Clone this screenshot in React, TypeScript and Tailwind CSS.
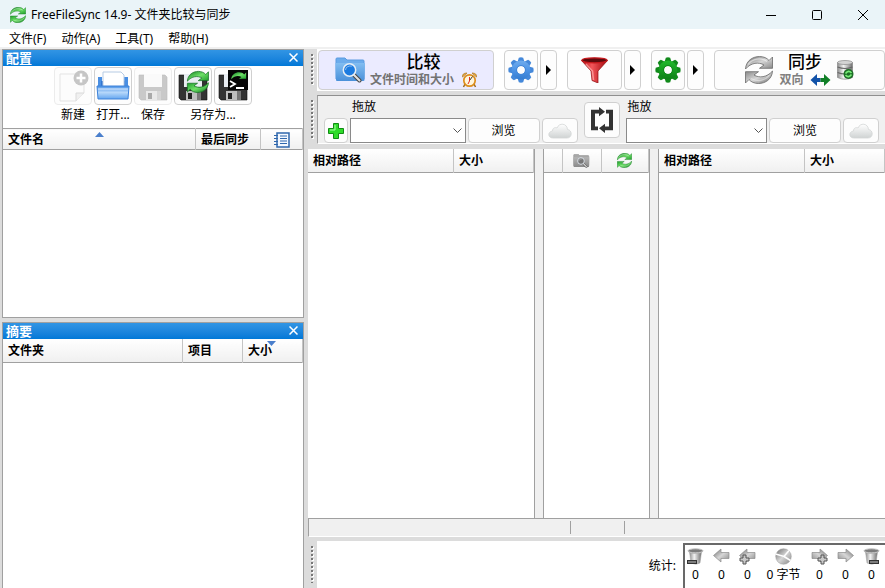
import { ReactNode } from "react";
import clsx from "clsx";

const menus = ["文件(F)", "动作(A)", "工具(T)", "帮助(H)"];

const buttonBase = "flex shrink-0 items-center justify-center rounded border border-[#d0d0d0] bg-[#fdfdfd]";

const headCell =
  "border-r border-[#c4c4c4] px-[5px] pt-px text-left align-middle font-bold whitespace-nowrap bg-linear-to-b from-white to-[#f0f0f0]";

const arrowTop = "M0.5 13C1 4.500 8 0.500 14.500 0.500C18.500 0.500 22 2 24 4.500L27.500 1V12.300H14.500L19 9C14 5.800 6 6.500 0.500 13Z";

function Gradients() {
  return (
    <svg className="absolute h-0 w-0" aria-hidden="true">
      <defs>
        <linearGradient id="green" x1="0" y1="0" x2="1" y2="1">
          <stop offset="0" stopColor="#0b7a1c" />
          <stop offset="0.5" stopColor="#6fe068" />
          <stop offset="1" stopColor="#1b9a28" />
        </linearGradient>
        <linearGradient id="gray" x1="0" y1="0" x2="1" y2="1">
          <stop offset="0" stopColor="#6c6c6c" />
          <stop offset="0.5" stopColor="#d6d6d6" />
          <stop offset="1" stopColor="#858585" />
        </linearGradient>
        <linearGradient id="blue" gradientUnits="userSpaceOnUse" x1="0" y1="0" x2="0" y2="26">
          <stop offset="0" stopColor="#7db5f0" />
          <stop offset="0.5" stopColor="#4d94e6" />
          <stop offset="1" stopColor="#2a73c8" />
        </linearGradient>
        <linearGradient id="folder" x1="0" y1="0" x2="0" y2="1">
          <stop offset="0" stopColor="#82bdf1" />
          <stop offset="1" stopColor="#4a90da" />
        </linearGradient>
        <linearGradient id="folderGray" x1="0" y1="0" x2="0" y2="1">
          <stop offset="0" stopColor="#b4b4b4" />
          <stop offset="1" stopColor="#8a8a8a" />
        </linearGradient>
        <linearGradient id="tray" x1="0" y1="0" x2="0" y2="1">
          <stop offset="0" stopColor="#4b92e6" />
          <stop offset="0.5" stopColor="#b5d7fa" />
          <stop offset="1" stopColor="#64a6ef" />
        </linearGradient>
        <linearGradient id="red" x1="0" y1="0" x2="1" y2="0">
          <stop offset="0" stopColor="#b80f14" />
          <stop offset="0.4" stopColor="#f3565a" />
          <stop offset="1" stopColor="#a0060b" />
        </linearGradient>
        <linearGradient id="greenGear" gradientUnits="userSpaceOnUse" x1="0" y1="0" x2="0" y2="26">
          <stop offset="0" stopColor="#23c52f" />
          <stop offset="1" stopColor="#0a7412" />
        </linearGradient>
        <linearGradient id="metal" x1="0" y1="0" x2="1" y2="0">
          <stop offset="0" stopColor="#8d8d8d" />
          <stop offset="0.4" stopColor="#f2f2f2" />
          <stop offset="1" stopColor="#707070" />
        </linearGradient>
        <linearGradient id="cloud" x1="0" y1="0" x2="0" y2="1">
          <stop offset="0" stopColor="#ffffff" />
          <stop offset="1" stopColor="#cfd3d3" />
        </linearGradient>
      </defs>
    </svg>
  );
}

function SyncArrows({ tone, size }: { tone: "green" | "gray"; size: number }) {
  const line = tone === "green" ? "#1b7d28" : "#6a6a6a";
  return (
    <svg width={size} height={size} viewBox="0 0 28 28" fill={`url(#${tone})`} stroke={line} strokeWidth="0.8">
      <path d={arrowTop} />
      <path d={arrowTop} transform="rotate(180 14 14)" />
      <path d="M3 8.500C7 2.500 16 1 22 5.500" fill="none" stroke="#fff" strokeOpacity="0.5" strokeWidth="1.2" />
      <path d="M6 22.500C12 26 20 25 24.500 19" fill="none" stroke="#fff" strokeOpacity="0.4" strokeWidth="1.2" />
    </svg>
  );
}

function Gear({ fill, line }: { fill: string; line: string }) {
  // tooth outline turned in eight steps round the hub
  const tooth = "M-3.500 -8L-2.200 -12.300Q0 -13 2.200 -12.300L3.500 -8Z";
  return (
    <svg width="26" height="26" viewBox="0 0 26 26">
      {[0, 45, 90, 135, 180, 225, 270, 315].map((a) => (
        <path key={a} d={tooth} fill={line} transform={`translate(13 13) rotate(${a})`} />
      ))}
      <path
        d="M13 3.500A9.500 9.500 0 1 1 13 22.500A9.500 9.500 0 1 1 13 3.500ZM13 9A4 4 0 1 0 13 17A4 4 0 1 0 13 9Z"
        fill={fill}
        fillRule="evenodd"
      />
      <circle cx="13" cy="13" r="4.500" fill="none" stroke={line} />
    </svg>
  );
}

function FolderSearch({ gray }: { gray?: boolean }) {
  const line = gray ? "#8a8a8a" : "#5a9be0";
  return (
    <svg width={gray ? 17 : 31} height={gray ? 14 : 26} viewBox="0 0 31 26">
      <path d="M1 22V2Q1 1 2 1H10L12 3H28Q29 3 29 4V22Z" fill={gray ? "#a8a8a8" : "#6cacec"} stroke={line} />
      <path d="M0.500 6H30L29.500 23Q29.500 24 28 24H2Q1 24 1 23Z" fill={gray ? "url(#folderGray)" : "url(#folder)"} />
      <path d="M19 18L24.500 23.500" stroke={gray ? "#555" : "#474747"} strokeWidth="4" strokeLinecap="round" />
      <path d="M19 18L24.500 23.500" stroke="#e2e2e2" strokeWidth="2" strokeLinecap="round" />
      <circle cx="14.500" cy="13" r="6.200" fill={gray ? "#777" : "#1c7be0"} stroke="#e6eef6" strokeWidth="1.500" />
      <path d="M10.500 13Q11 8.500 17 9" stroke="#fff" strokeOpacity="0.500" fill="none" />
    </svg>
  );
}

function Clock() {
  return (
    <svg width="15" height="16" viewBox="0 0 15 16">
      <path d="M3 12L1.500 15M12 12L13.500 15" stroke="#9b6a20" strokeWidth="1.500" />
      <path d="M0.500 5Q0 1 5 1ZM14.500 5Q15 1 10 1Z" fill="#f2b238" stroke="#aa7424" strokeWidth="0.700" />
      <circle cx="7.500" cy="8.500" r="5.700" fill="#fff6dd" stroke="#dd8f1d" strokeWidth="1.700" />
      <path d="M7.500 8.500L10.500 4.500" stroke="#333" />
      <path d="M7.500 5V9L6 12" stroke="#e12f21" fill="none" />
    </svg>
  );
}

function Funnel() {
  return (
    <svg width="27" height="26" viewBox="0 0 27 26">
      <path d="M0.500 3.500L10 14L11 23.500L17 26V14L26.500 3.500Z" fill="url(#red)" stroke="#8c0b0f" strokeWidth="0.700" />
      <ellipse cx="13.500" cy="3.300" rx="12.700" ry="2.500" fill="#5c0b0d" stroke="#c9181d" strokeWidth="1.200" />
      <path d="M5 7L11.500 14L12.500 23" stroke="#ffb0ae" strokeOpacity="0.700" fill="none" strokeWidth="1.500" />
    </svg>
  );
}

function Cloud() {
  return (
    <svg width="24" height="16" viewBox="0 0 24 16">
      <path
        d="M5 15C-0.500 15-0.500 8.500 4.500 8C4.500 5 7 4 9 5C11-0.500 19 0 19.500 6.500C24.500 7 24.500 15 19 15Z"
        fill="url(#cloud)"
        stroke="#d3d6d6"
        strokeWidth="0.800"
      />
    </svg>
  );
}

function Floppy({ dim, children }: { dim?: boolean; children?: ReactNode }) {
  const body = dim ? "#c9c9c9" : "#333";
  return (
    <svg width="34" height="34" viewBox="0 0 34 34">
      <path d="M3 6H29L31 8V31H5L3 29Z" fill={body} stroke={dim ? "#bcbcbc" : "#111"} strokeWidth="0.600" />
      <path d="M8 5H26V18H8Z" fill={dim ? "#fafafa" : "#e9edf2"} />
      <path d="M10 22H25V31H10Z" fill={dim ? "#e9e9e9" : "#bfbfbf"} />
      <path d="M12 24H16V30H12Z" fill={dim ? "#a9a9a9" : "#222"} />
      <path d="M21 22H25V31H21Z" fill={dim ? "#d6d6d6" : "#777"} />
      {children}
    </svg>
  );
}

function SaveSync() {
  return (
    <Floppy>
      <g transform="translate(11 2) scale(0.78)" fill="url(#green)" stroke="#187326">
        <path d={arrowTop} />
        <path d={arrowTop} transform="rotate(180 14 14)" />
      </g>
    </Floppy>
  );
}

function SaveBatch() {
  return (
    <Floppy>
      <rect x="12" y="1" width="20" height="20" fill="#050505" />
      <path d={arrowTop} transform="translate(15 3) scale(0.55)" fill="url(#green)" />
      <path d="M14 12L19 15L14 18M20 19H28" stroke="#fff" strokeWidth="1.800" fill="none" />
    </Floppy>
  );
}

function NewFile() {
  return (
    <svg width="34" height="34" viewBox="0 0 34 34">
      <path d="M4 5H28V24L20 32H4Z" fill="#fcfcfc" stroke="#e3e3e3" />
      <path d="M28 24H20V32" fill="#f0f0f0" stroke="#dadada" />
      <circle cx="25" cy="9" r="7.500" fill="#c6c6c6" />
      <path d="M25 4.500V13.500M20.500 9H29.500" stroke="#fff" strokeWidth="2.500" />
    </svg>
  );
}

function OpenTray() {
  return (
    <svg width="34" height="34" viewBox="0 0 34 34">
      <path d="M2 8H6V17H2ZM28 8H32V17H28Z" fill="#4a8fe3" />
      <path d="M5 12H29V19H5Z" fill="#3275cf" />
      <path d="M7 3H25L28 6V18H7Z" fill="#fff" stroke="#b6cbe4" />
      <path d="M1 17H33L32 30H2Z" fill="url(#tray)" stroke="#3e83da" />
      <path d="M2 20H32" stroke="#dcecff" />
    </svg>
  );
}

function Database() {
  return (
    <svg width="17" height="20" viewBox="0 0 17 20">
      <path d="M0.500 2.500V17.500Q8 21 15.500 17.500V2.500Z" fill="url(#metal)" stroke="#888" strokeWidth="0.700" />
      <ellipse cx="8" cy="2.500" rx="7.500" ry="2" fill="#d4d4d4" stroke="#8a8a8a" strokeWidth="0.700" />
      <path d="M0.500 7Q8 10 15.500 7M0.500 12.500Q8 15.500 15.500 12.500" stroke="#666" strokeWidth="1.200" fill="none" />
      <circle cx="11.500" cy="14" r="5" fill="#1e6d27" />
      <path d="M8.500 13.500Q11.500 9.500 14.500 13M14.500 14.500Q11.500 18.500 8.500 15" stroke="#78ed78" strokeWidth="1.600" fill="none" />
    </svg>
  );
}

function TwoWay() {
  return (
    <svg width="21" height="12" viewBox="0 0 21 12">
      <path d="M0.500 6L7 0V4H10.500V8H7V12Z" fill="#1252a8" />
      <path d="M20.500 6L14 0V4H10.500V8H14V12Z" fill="#128028" />
    </svg>
  );
}

function Swap() {
  return (
    <svg width="24" height="26" viewBox="0 0 24 28" preserveAspectRatio="none" fill="none" stroke="#333" strokeWidth="4">
      <path d="M10 5H3V23H8M16 5H21V23H15" />
      <path d="M9 0L15 5L9 10ZM15 18L9 23L15 28Z" fill="#333" stroke="none" />
    </svg>
  );
}

function Notebook() {
  return (
    <svg width="16" height="16" viewBox="0 0 16 16" fill="none" stroke="#2f67ad">
      <rect x="3" y="1" width="12" height="14" fill="#f3f8ff" strokeWidth="1.500" />
      <path d="M6 4H13M6 6.500H13M6 9H13M6 11.500H13M0 3.500H4M0 6.500H4M0 9.500H4M0 12.500H4" />
    </svg>
  );
}

function StatIcon({ kind }: { kind: string }) {
  const flip = kind.startsWith("right");
  if (kind.startsWith("delete")) {
    return (
      <svg width="17" height="17" viewBox="0 0 17 17">
        <path d="M2.500 4L4 15Q9 17.500 13 15L14.500 4Z" fill="url(#metal)" stroke="#a5a5a5" strokeWidth="0.500" />
        <path d="M1 3Q2 5.500 8.500 5.500Q15 5.500 16 3Z" fill="#d6d6d6" stroke="#9a9a9a" strokeWidth="0.500" />
        <ellipse cx="8.500" cy="2.800" rx="7.500" ry="2" fill="#7c7c7c" stroke="#c4c4c4" />
        <rect x={kind === "deleteLeft" ? 0.5 : 6.5} y="12.500" width="9" height="3" fill="#7d7d7d" stroke="#333" />
      </svg>
    );
  }
  if (kind === "bytes") {
    return (
      <svg width="17" height="17" viewBox="0 0 17 17">
        <circle cx="8.500" cy="8.500" r="7.800" fill="url(#gray)" stroke="#999" strokeWidth="0.500" />
        <path d="M0.500 6L9 8.500L14 2.500M9 8.500L15.500 12.500" stroke="#fff" strokeWidth="1.500" fill="none" />
      </svg>
    );
  }
  return (
    <svg width="17" height="17" viewBox="0 0 17 17">
      <path
        d="M0.500 7.500L8 1V4.500H16V10.500H8V14Z"
        fill="url(#gray)"
        stroke="#8d8d8d"
        strokeWidth="0.700"
        transform={flip ? "matrix(-1 0 0 1 17 0)" : undefined}
      />
      {kind.endsWith("Add") && (
        <path
          d="M4 7H7V10H10V13H7V16H4V13H1V10H4Z"
          fill="#c9c9c9"
          stroke="#555"
          transform={flip ? "translate(6 0)" : undefined}
        />
      )}
    </svg>
  );
}

function Grip() {
  return (
    <div className="flex w-[9px] shrink-0 justify-center bg-[#dcdcdc] py-[5px]">
      <svg className="h-full w-[3px]" aria-hidden="true">
        <pattern id="grip" width="3" height="4" patternUnits="userSpaceOnUse">
          <path d="M1 1H3V3H1Z" fill="#fff" />
          <path d="M0 0H2V2H0Z" fill="#777" />
        </pattern>
        <rect width="3" height="100%" fill="url(#grip)" />
      </svg>
    </div>
  );
}

function PanelTitle({ children }: { children: ReactNode }) {
  return (
    <div className="flex h-4 shrink-0 items-center justify-between bg-linear-to-b from-[#3195e4] to-[#0078d7] pr-1 pb-px pl-[3px] text-white">
      <h2 className="text-[13px] leading-[14px] font-bold">{children}</h2>
      <button type="button" aria-label="关闭" className="flex size-3 items-center justify-center">
        <svg width="9" height="9" viewBox="0 0 9 9" stroke="#fff" strokeWidth="1.500">
          <path d="M0.500 0.500L8.500 8.500M8.500 0.500L0.500 8.500" />
        </svg>
      </button>
    </div>
  );
}

function MoreButton({ label }: { label: string }) {
  return (
    <button type="button" aria-label={label} className={clsx(buttonBase, "ml-0.5 h-10 w-[17px]")}>
      <svg width="5" height="10" viewBox="0 0 5 10">
        <path d="M0 0L5 5L0 10Z" />
      </svg>
    </button>
  );
}

function FolderPicker({ id, add }: { id: string; add?: boolean }) {
  return (
    <div className="flex min-w-0 flex-1 flex-col">
      <label htmlFor={id} className={clsx("h-[22px] leading-[22px]", add ? "pl-7" : "pl-0.5")}>
        拖放
      </label>
      <div className="flex gap-0.5">
        {add && (
          <button type="button" aria-label="添加文件夹对" className={clsx(buttonBase, "h-[25px] w-6")}>
            <svg width="16" height="16" viewBox="0 0 16 16">
              <path d="M5.500 0.500H10.500V5.500H15.500V10.500H10.500V15.500H5.500V10.500H0.500V5.500H5.500Z" fill="#2fdc2a" stroke="#118c14" />
              <path d="M7 2V7H2" stroke="#a4ff9e" fill="none" />
            </svg>
          </button>
        )}
        <div className="relative min-w-0 flex-1">
          <select id={id} className="block h-[25px] w-full appearance-none border border-[#8a8a8a] bg-white px-1">
            <option></option>
          </select>
          <svg
            className="pointer-events-none absolute top-[10px] right-1"
            width="9"
            height="6"
            viewBox="0 0 9 6"
            fill="none"
            stroke="#555"
          >
            <path d="M0.500 0.500L4.500 4.500L8.500 0.500" />
          </svg>
        </div>
        <button type="button" className={clsx(buttonBase, "h-[25px] w-[72px]")}>
          浏览
        </button>
        <button type="button" aria-label="云存储" className={clsx(buttonBase, "h-[25px] w-9")}>
          <Cloud />
        </button>
      </div>
    </div>
  );
}

function FileGrid({ className }: { className: string }) {
  return (
    <div className={clsx("min-w-0 flex-1 border-[#a0a0a0] bg-white", className)}>
      <table className="w-full table-fixed border-collapse">
        <thead>
          <tr className="h-[23px] border-b border-[#a0a0a0]">
            <th className={headCell}>相对路径</th>
            <th className={clsx(headCell, "w-20")}>大小</th>
          </tr>
        </thead>
      </table>
    </div>
  );
}

const fileButtons = [
  { label: "新建", icon: <NewFile />, dim: true },
  { label: "打开...", icon: <OpenTray /> },
  { label: "保存", icon: <Floppy dim />, dim: true },
  { label: "另存为同步", icon: <SaveSync /> },
  { label: "另存为批处理", icon: <SaveBatch /> },
];

const stats = [
  { kind: "deleteLeft", value: "0" },
  { kind: "left", value: "0" },
  { kind: "leftAdd", value: "0" },
  { kind: "bytes", value: "0 字节" },
  { kind: "rightAdd", value: "0" },
  { kind: "right", value: "0" },
  { kind: "deleteRight", value: "0" },
];

function Sidebar() {
  return (
    <aside className="flex w-[304px] shrink-0 flex-col gap-1 pl-0.5">
      <section className="flex h-[269px] shrink-0 flex-col border border-[#a0a0a0] bg-white">
        <PanelTitle>配置</PanelTitle>
        <div className="grid h-[62px] shrink-0 grid-cols-[repeat(5,38px)] content-start justify-center gap-x-0.5 pt-px">
          {fileButtons.map((b) => (
            <button
              key={b.label}
              type="button"
              aria-label={b.label}
              className={clsx(
                "flex h-[38px] items-center justify-center rounded border bg-[#fdfdfd]",
                b.dim ? "border-[#ececec]" : "border-[#d0d0d0]"
              )}
            >
              {b.icon}
            </button>
          ))}
          <span className="text-center leading-5">新建</span>
          <span className="text-center leading-5 whitespace-nowrap">打开...</span>
          <span className="text-center leading-5">保存</span>
          <span className="col-span-2 text-center leading-5">另存为...</span>
        </div>
        <table className="w-full table-fixed border-collapse">
          <thead>
            <tr className="h-[21px] border-y border-[#a0a0a0]">
              <th className={clsx(headCell, "relative")}>
                文件名
                <svg className="absolute top-[3px] left-[92px]" width="9" height="5" viewBox="0 0 9 5">
                  <path d="M4.500 0L9 5H0Z" fill="#4a7fcc" />
                </svg>
              </th>
              <th className={clsx(headCell, "w-[65px]")}>最后同步</th>
              <th className={clsx(headCell, "w-[42px]")} aria-label="日志">
                <div className="flex justify-center">
                  <Notebook />
                </div>
              </th>
            </tr>
          </thead>
        </table>
      </section>

      <section className="flex min-h-0 flex-1 flex-col border border-b-0 border-[#a0a0a0] bg-white">
        <PanelTitle>摘要</PanelTitle>
        <table className="w-full table-fixed border-collapse">
          <thead>
            <tr className="h-[23px] border-b border-[#a0a0a0]">
              <th className={headCell}>文件夹</th>
              <th className={clsx(headCell, "w-[60px]")}>项目</th>
              <th className={clsx(headCell, "relative w-[60px]")}>
                大小
                <svg className="absolute top-0.5 left-6" width="9" height="5" viewBox="0 0 9 5">
                  <path d="M0 0H9L4.500 5Z" fill="#4a7fcc" />
                </svg>
              </th>
            </tr>
          </thead>
        </table>
      </section>
    </aside>
  );
}

export default function App() {
  return (
    <div className="flex h-screen w-full flex-col overflow-hidden bg-[#dcdcdc] font-['Noto_Sans','Noto_Sans_CJK_SC',sans-serif] text-xs text-black">
      <Gradients />

      {/* Title bar */}
      <header className="flex h-[29px] shrink-0 items-center bg-[#eaf4f8] pr-4 pl-2.5">
        <SyncArrows tone="green" size={16} />
        <h1 className="ml-[5px] flex-1 leading-4">FreeFileSync 14.9- 文件夹比较与同步</h1>
        <div className="flex gap-[34px]">
          <button type="button" aria-label="最小化">
            <svg width="12" height="12" viewBox="0 0 12 12" stroke="#000">
              <path d="M1 6.500H11" />
            </svg>
          </button>
          <button type="button" aria-label="最大化">
            <svg width="12" height="12" viewBox="0 0 12 12" stroke="#000" fill="none">
              <rect x="1.500" y="1.500" width="9" height="9" rx="1" />
            </svg>
          </button>
          <button type="button" aria-label="关闭窗口">
            <svg width="12" height="12" viewBox="0 0 12 12" stroke="#000">
              <path d="M1 1L11 11M11 1L1 11" />
            </svg>
          </button>
        </div>
      </header>

      <nav className="flex h-5 shrink-0 items-center gap-[15px] border-b-2 border-[#f0f0f0] bg-white pt-0.5 pl-[9px]">
        {menus.map((m) => (
          <button key={m} type="button" className="leading-4">
            {m}
          </button>
        ))}
      </nav>

      <div className="flex min-h-0 flex-1 gap-1">
        <Sidebar />

        <main className="flex min-w-0 flex-1 flex-col">
          {/* Main toolbar */}
          <div className="flex h-[42px] shrink-0">
            <Grip />
            <div className="flex min-w-0 flex-1 items-center bg-white pl-px">
              <button
                type="button"
                className="flex h-10 w-[176px] shrink-0 items-center justify-center gap-1 rounded border border-[#d0d0d0] bg-[#ebebff]"
              >
                <FolderSearch />
                <span className="flex flex-col items-center">
                  <span className="text-[17px] leading-5 font-medium">比较</span>
                  <span className="flex items-center gap-2 leading-4 font-bold text-[#737373]">
                    文件时间和大小
                    <Clock />
                  </span>
                </span>
              </button>
              <button type="button" aria-label="比较设置" className={clsx(buttonBase, "ml-2.5 h-10 w-[34px]")}>
                <Gear fill="url(#blue)" line="#4488da" />
              </button>
              <MoreButton label="比较选项" />
              <button type="button" aria-label="过滤器" className={clsx(buttonBase, "ml-2.5 h-10 w-[55px]")}>
                <Funnel />
              </button>
              <MoreButton label="过滤器选项" />
              <button type="button" aria-label="同步设置" className={clsx(buttonBase, "ml-2.5 h-10 w-[34px]")}>
                <Gear fill="url(#greenGear)" line="#118a1b" />
              </button>
              <MoreButton label="同步选项" />
              <button
                type="button"
                className="ml-2.5 flex h-10 min-w-0 flex-1 items-center justify-center gap-1.5 rounded border border-[#d0d0d0] bg-[#fdfdfd]"
              >
                <SyncArrows tone="gray" size={28} />
                <span className="flex flex-col items-center">
                  <span className="text-[17px] leading-5 font-medium">同步</span>
                  <span className="flex items-center gap-1.5 leading-4 font-bold text-[#808080]">
                    双向
                    <TwoWay />
                  </span>
                </span>
                <Database />
              </button>
            </div>
          </div>

          {/* Folder pair */}
          <div className="mt-1 flex h-[49px] shrink-0">
            <Grip />
            <div className="flex min-w-0 flex-1 border-t border-b border-l border-t-[#8f8f8f] border-b-white border-l-[#a0a0a0] bg-[#f0f0f0] px-1.5">
              <FolderPicker id="left-folder" add />
              <button type="button" aria-label="交换两侧" className={clsx(buttonBase, "mx-1.5 mt-1.5 h-9 w-9")}>
                <Swap />
              </button>
              <FolderPicker id="right-folder" />
            </div>
          </div>

          {/* File grids */}
          <div className="mt-[5px] flex min-h-0 flex-1 gap-2 bg-[#f0f0f0]">
            <FileGrid className="border-r" />
            <div className="w-[107px] shrink-0 border-x border-[#a0a0a0] bg-white">
              <table className="w-full table-fixed border-collapse">
                <thead>
                  <tr className="h-[23px] border-b border-[#a0a0a0]">
                    <th className={clsx(headCell, "w-[18px]")} aria-label="选择"></th>
                    <th className={clsx(headCell, "w-[39px]")} aria-label="差异">
                      <div className="flex justify-center">
                        <FolderSearch gray />
                      </div>
                    </th>
                    <th className={headCell} aria-label="操作">
                      <div className="flex justify-center">
                        <SyncArrows tone="green" size={15} />
                      </div>
                    </th>
                  </tr>
                </thead>
              </table>
            </div>
            <FileGrid className="border-l" />
          </div>

          {/* Status bar */}
          <div className="flex h-[19px] shrink-0 border-t border-b border-l border-t-[#a0a0a0] border-b-white border-l-[#a0a0a0] bg-[#f0f0f0] py-0.5">
            <div className="flex-1" />
            <div className="w-[55px] border-x border-[#a0a0a0]" />
            <div className="flex-1" />
          </div>

          {/* Statistics */}
          <div className="mt-1 flex h-[47px] shrink-0">
            <Grip />
            <div className="flex min-w-0 flex-1 items-stretch justify-end bg-white pt-0.5">
              <span className="mr-[7px] self-center">统计:</span>
              <dl className="flex gap-[9px] border-t-2 border-l-2 border-[#696969] pt-[3px] pr-[5px] pl-0.5">
                {stats.map((s) => (
                  <div
                    key={s.kind}
                    className={clsx("flex flex-col items-center gap-0.5", s.kind === "bytes" ? "w-[37px]" : "w-[17px]")}
                  >
                    <dt>
                      <StatIcon kind={s.kind} />
                    </dt>
                    <dd className="leading-4 whitespace-nowrap">{s.value}</dd>
                  </div>
                ))}
              </dl>
            </div>
          </div>
        </main>
      </div>
    </div>
  );
}
